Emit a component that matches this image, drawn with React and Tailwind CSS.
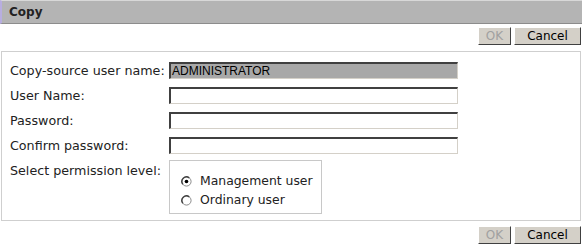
export default function App() {
  const font = { fontFamily: '"DejaVu Sans", Verdana, sans-serif' };
  const Btn = ({ children, disabled }) => (
    <div
      className={`h-[18px] flex items-center justify-center bg-[#d4d0c8] border border-t-[#ffffff] border-l-[#ffffff] border-r-[#404040] border-b-[#404040] text-[12px] leading-none ${disabled ? 'text-[#a0a0a0]' : 'text-black'}`}
    >
      {children}
    </div>
  );
  const Buttons = () => (
    <div className="flex justify-end gap-[3px] pr-[1px]">
      <div className="w-[33px]"><Btn disabled>OK</Btn></div>
      <div className="w-[67px]"><Btn>Cancel</Btn></div>
    </div>
  );
  const Input = ({ value, disabled }) => (
    <div
      className={`w-[289px] h-[17px] border-t-2 border-l-2 border-t-[#404040] border-l-[#404040] border-b border-r border-b-[#d4d0c8] border-r-[#d4d0c8] flex items-center pl-[1px] text-[12px] text-black ${disabled ? 'bg-[#a8a8a8]' : 'bg-white'}`}
      style={{ fontFamily: '"Liberation Sans", Arial, sans-serif' }}
    >
      {value}
    </div>
  );
  const Row = ({ label, children }) => (
    <div className="flex items-center h-[25px]">
      <div className="w-[167px] pl-[8px] text-[12.7px] text-[#222] whitespace-nowrap">{label}</div>
      {children}
    </div>
  );
  const Radio = ({ checked }) => (
    <svg width="11" height="11" viewBox="0 0 12 12">
      <circle cx="6" cy="6" r="5" fill="white" stroke="#808080" strokeWidth="1" />
      <path d="M2 9 A5 5 0 0 1 9 2" fill="none" stroke="#404040" strokeWidth="1.5" />
      {checked && <circle cx="6" cy="6" r="2" fill="black" />}
    </svg>
  );
  return (
    <div className="w-[582px] h-[249px] bg-white flex flex-col" style={font}>
      <div className="h-[24px] bg-[#b4b4b4] border-t border-t-[#d8d8d8] border-b border-b-[#8c8c8c] border-l-2 border-l-[#b8aee0] flex items-center pl-[7px] text-[12px] font-bold text-[#222]">
        Copy
      </div>
      <div className="mt-[3px]">
        <Buttons />
      </div>
      <div className="mt-[6px] mx-[1px] h-[170px] border border-[#cfcfcf] pt-[6px]">
        <Row label="Copy-source user name:"><Input value="ADMINISTRATOR" disabled /></Row>
        <Row label="User Name:"><Input /></Row>
        <Row label="Password:"><Input /></Row>
        <Row label="Confirm password:"><Input /></Row>
        <div className="flex mt-[2px]">
          <div className="w-[167px] pl-[8px] text-[12.7px] text-[#222] pt-[1px] whitespace-nowrap">Select permission level:</div>
          <div className="w-[153px] h-[54px] border border-[#c8c8c8] pl-[11px] pt-[11px] text-[12.4px] text-[#222]">
            <div className="flex items-center gap-[8px] h-[19px]"><Radio checked />Management user</div>
            <div className="flex items-center gap-[8px] h-[19px]"><Radio />Ordinary user</div>
          </div>
        </div>
      </div>
      <div className="mt-[5px]">
        <Buttons />
      </div>
    </div>
  );
}
